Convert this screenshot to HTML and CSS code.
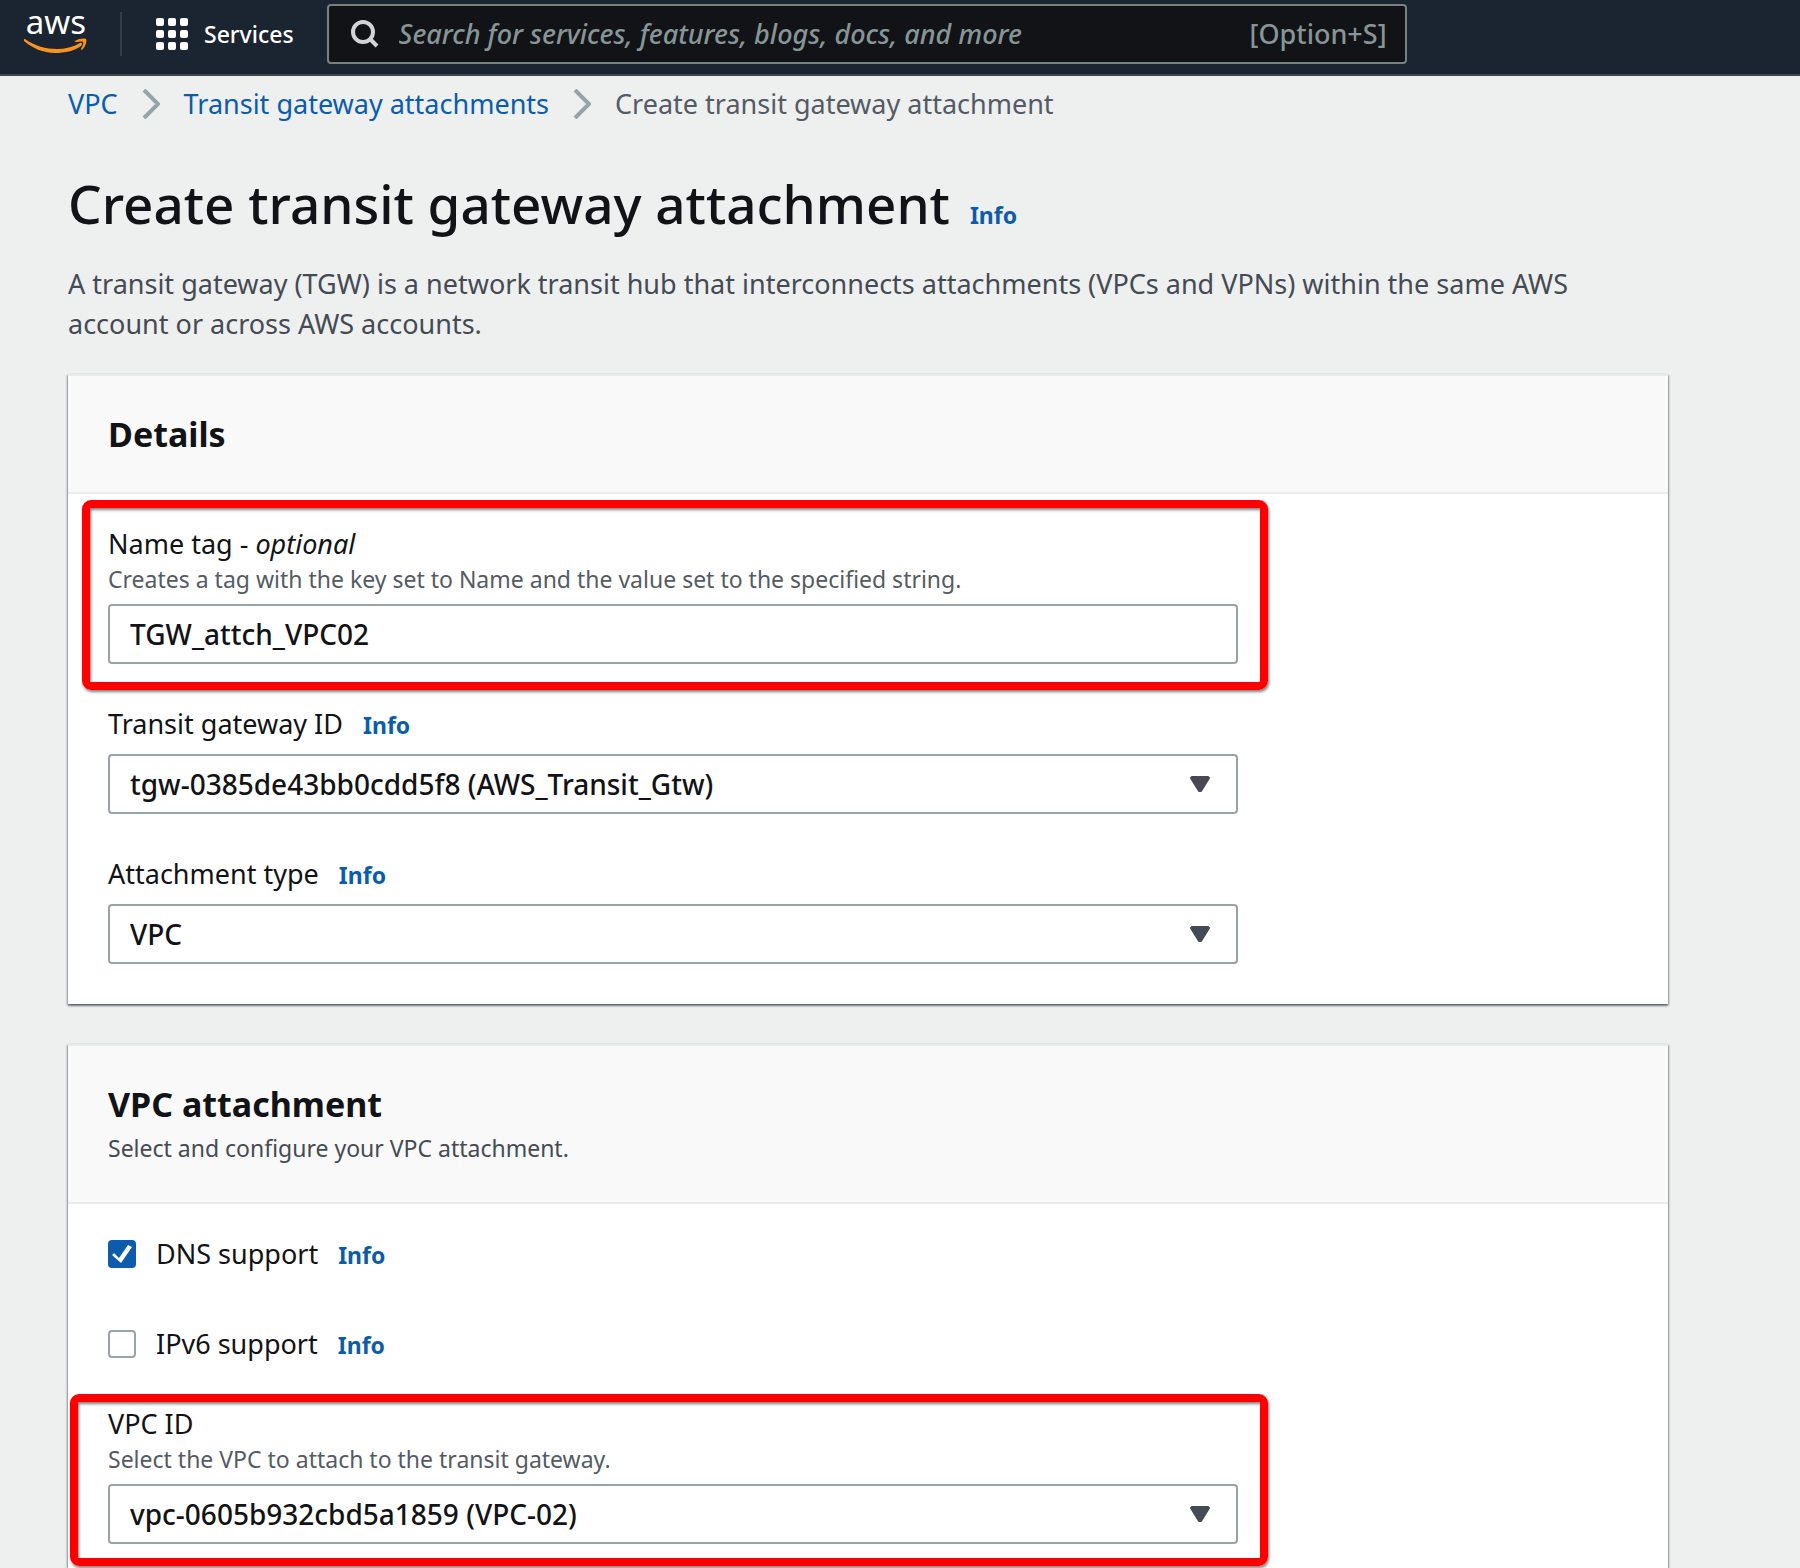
FILE: index.html
```html
<!DOCTYPE html>
<html lang="en">
<head>
    <meta charset="UTF-8">
    <meta name="viewport" content="width=device-width, initial-scale=1.0">
    <title>Create transit gateway attachment</title>
    <link rel="stylesheet" href="styles.css">
</head>
<body>
    <header class="topbar">
        <a class="logo" href="#" aria-label="aws home">
            <span class="logo-text">aws</span>
            <svg class="logo-smile" viewBox="0 0 64 16" aria-hidden="true">
                <path d="M1 1C11 8 22 11 33 11C41 11 49 9 56 5C58 4 59 6 57 8C50 13 41 15 31 15C19 15 8 10 0 3C-1 2 0 1 1 1Z"/>
                <path d="M51 3C55 0 61 0 62 1C63 3 62 8 58 12C57 12 57 11 57 11C58 9 60 5 59 4C58 3 54 4 52 4C51 4 50 3 51 3Z"/>
            </svg>
        </a>
        <button class="services" type="button">
            <svg class="grid-icon" viewBox="0 0 32 32" aria-hidden="true">
                <rect x="0" y="0" width="8" height="8" rx="2"/>
                <rect x="12" y="0" width="8" height="8" rx="2"/>
                <rect x="24" y="0" width="8" height="8" rx="2"/>
                <rect x="0" y="12" width="8" height="8" rx="2"/>
                <rect x="12" y="12" width="8" height="8" rx="2"/>
                <rect x="24" y="12" width="8" height="8" rx="2"/>
                <rect x="0" y="24" width="8" height="8" rx="2"/>
                <rect x="12" y="24" width="8" height="8" rx="2"/>
                <rect x="24" y="24" width="8" height="8" rx="2"/>
            </svg>
            Services
        </button>
        <div class="search">
            <svg class="search-icon" viewBox="0 0 28 28" aria-hidden="true">
                <circle cx="12" cy="12" r="10"/>
                <path d="M19 19L26 26"/>
            </svg>
            <input type="search" aria-label="Search" placeholder="Search for services, features, blogs, docs, and more">
            <span class="shortcut">[Option+S]</span>
        </div>
    </header>

    <main>
        <nav class="breadcrumbs" aria-label="Breadcrumbs">
            <a href="#">VPC</a>
            <svg class="chevron" viewBox="0 0 18 30" aria-hidden="true"><path d="M2 1L16 15L2 29"/></svg>
            <a href="#">Transit gateway attachments</a>
            <svg class="chevron" viewBox="0 0 18 30" aria-hidden="true"><path d="M2 1L16 15L2 29"/></svg>
            <span>Create transit gateway attachment</span>
        </nav>

        <div class="title">
            <h1>Create transit gateway attachment</h1>
            <a class="info" href="#">Info</a>
        </div>
        <p class="description">A transit gateway (TGW) is a network transit hub that interconnects attachments (VPCs and VPNs) within the same AWS account or across AWS accounts.</p>

        <!-- Details -->
        <section class="card">
            <div class="card-header">
                <h2>Details</h2>
            </div>
            <div class="card-body">
                <div class="field">
                    <label for="nameTag">Name tag - <em>optional</em></label>
                    <p class="hint">Creates a tag with the key set to Name and the value set to the specified string.</p>
                    <input class="control" type="text" id="nameTag" value="TGW_attch_VPC02">
                    <div class="highlight highlight-name"></div>
                </div>
                <div class="field">
                    <div class="label-row">
                        <label for="tgwId">Transit gateway ID</label>
                        <a class="info" href="#">Info</a>
                    </div>
                    <div class="select">
                        <select class="control" id="tgwId">
                            <option>tgw-0385de43bb0cdd5f8 (AWS_Transit_Gtw)</option>
                        </select>
                        <svg class="arrow" viewBox="0 0 20 16" aria-hidden="true"><path d="M2 1H18L19 2L11 15H9L1 2Z"/></svg>
                    </div>
                </div>
                <div class="field">
                    <div class="label-row">
                        <label for="attachType">Attachment type</label>
                        <a class="info" href="#">Info</a>
                    </div>
                    <div class="select">
                        <select class="control" id="attachType">
                            <option>VPC</option>
                        </select>
                        <svg class="arrow" viewBox="0 0 20 16" aria-hidden="true"><path d="M2 1H18L19 2L11 15H9L1 2Z"/></svg>
                    </div>
                </div>
            </div>
        </section>

        <!-- VPC attachment -->
        <section class="card card-last">
            <div class="card-header">
                <h2>VPC attachment</h2>
                <p class="subtitle">Select and configure your VPC attachment.</p>
            </div>
            <div class="card-body">
                <div class="checks">
                    <div class="label-row">
                        <input type="checkbox" id="dnsSupport" checked>
                        <label for="dnsSupport">DNS support</label>
                        <a class="info" href="#">Info</a>
                    </div>
                    <div class="label-row">
                        <input type="checkbox" id="ipv6Support">
                        <label for="ipv6Support">IPv6 support</label>
                        <a class="info" href="#">Info</a>
                    </div>
                </div>
                <div class="field">
                    <label for="vpcId">VPC ID</label>
                    <p class="hint">Select the VPC to attach to the transit gateway.</p>
                    <div class="select">
                        <select class="control" id="vpcId">
                            <option>vpc-0605b932cbd5a1859 (VPC-02)</option>
                        </select>
                        <svg class="arrow" viewBox="0 0 20 16" aria-hidden="true"><path d="M2 1H18L19 2L11 15H9L1 2Z"/></svg>
                    </div>
                    <div class="highlight highlight-vpc"></div>
                </div>
            </div>
        </section>
    </main>
</body>
</html>
```
FILE: styles.css
```css
* {
    box-sizing: border-box;
}

body {
    margin: 0;
    font-family: "Noto Sans", "Open Sans", sans-serif;
    font-size: 27px;
    font-weight: 450;
    line-height: 40px;
    color: #121316;
    background: #eeefef;
}

h1, h2, p {
    margin: 0;
}

a {
    color: #0b5cad;
    text-decoration: none;
}

input, select, button {
    font: inherit;
    color: inherit;
}

/* Top bar */
.topbar {
    display: flex;
    align-items: flex-start;
    height: 76px;
    padding: 4px 24px 0;
    background: #1b2531;
    border-bottom: 2px solid #414750;
}

.logo {
    display: flex;
    flex-direction: column;
    width: 64px;
    margin-top: 2px;
}

.logo-text {
    font-size: 33px;
    line-height: 32px;
    text-align: center;
    color: #fff;
}

.logo-smile {
    width: 64px;
    height: 16px;
    fill: #f7931e;
}

.services {
    display: flex;
    align-items: center;
    gap: 16px;
    height: 44px;
    margin: 8px 33px 0 32px;
    padding: 0 0 0 34px;
    border: 0;
    border-left: 2px solid #333c47;
    background: none;
    color: #fff;
    font-size: 23px;
    font-weight: 500;
}

.grid-icon {
    width: 32px;
    height: 32px;
    fill: #fff;
}

.search {
    display: flex;
    align-items: center;
    flex: 0 1 1080px;
    height: 60px;
    padding: 0 18px 0 22px;
    border: 2px solid #77827f;
    border-radius: 4px;
    background: #121316;
    color: #879596;
    font-weight: 500;
}

.search-icon {
    flex: none;
    width: 28px;
    height: 28px;
    margin-right: 20px;
    fill: none;
    stroke: #d0d6d6;
    stroke-width: 4;
}

.search input {
    flex: 1;
    min-width: 0;
    padding: 0;
    border: 0;
    outline: 0;
    background: none;
    font-style: italic;
}

.search input::placeholder {
    color: #879596;
    opacity: 1;
}

/* Page heading */
main {
    padding: 8px 132px 0 68px;
}

.breadcrumbs {
    display: flex;
    align-items: center;
    gap: 24px;
    color: #545b64;
}

.chevron {
    width: 18px;
    height: 30px;
    fill: none;
    stroke: #95a5a6;
    stroke-width: 4;
}

.title {
    display: flex;
    align-items: baseline;
    gap: 20px;
    margin-top: 44px;
}

h1 {
    font-size: 53px;
    line-height: 72px;
    font-weight: 500;
}

.info {
    font-size: 23px;
    line-height: 32px;
    font-weight: 700;
}

.description {
    margin-top: 24px;
    color: #444b54;
}

/* Cards */
.card {
    margin-top: 30px;
    border-top: 2px solid #e7ebeb;
    background: #fff;
    box-shadow: 0 2px 2px rgba(0, 28, 36, 0.4), 1px 1px 2px rgba(0, 28, 36, 0.3), -1px 1px 2px rgba(0, 28, 36, 0.3);
}

.card + .card {
    margin-top: 40px;
}

.card-header {
    padding: 36px 40px;
    border-bottom: 2px solid #e7ebeb;
    background: #f9f9f9;
}

h2 {
    font-size: 34px;
    line-height: 44px;
    font-weight: 700;
}

.subtitle {
    margin-top: 4px;
    font-size: 23px;
    line-height: 36px;
    color: #444b54;
}

.card-body {
    display: grid;
    grid-template-columns: repeat(4, 1fr);
    gap: 40px;
    padding: 30px 40px 40px;
}

.card-last .card-body {
    padding-bottom: 24px;
}

.field, .checks {
    position: relative;
    grid-column: 1 / span 3;
}

.field > label {
    display: block;
}

.checks {
    display: grid;
    gap: 50px;
}

.label-row {
    display: flex;
    align-items: baseline;
    gap: 20px;
}

.hint {
    font-size: 23px;
    line-height: 30px;
    color: #545b64;
}

.control {
    display: block;
    width: 100%;
    height: 60px;
    margin-top: 10px;
    padding: 0 20px;
    border: 2px solid #95a5a6;
    border-radius: 4px;
    background: #fff;
    font-size: 28px;
    font-weight: 500;
}

.select {
    position: relative;
}

select.control {
    appearance: none;
}

.arrow {
    position: absolute;
    right: 28px;
    top: 22px;
    width: 20px;
    height: 16px;
    fill: #444b54;
    stroke: #444b54;
    stroke-width: 2;
    stroke-linejoin: round;
    pointer-events: none;
}

input[type="checkbox"] {
    appearance: none;
    flex: none;
    align-self: center;
    width: 28px;
    height: 28px;
    margin: 0;
    border: 2px solid #95a5a6;
    border-radius: 4px;
}

input[type="checkbox"]:checked {
    border-color: #0b5cad;
    background: #0b5cad;
}

/* White tick */
input[type="checkbox"]:checked::before {
    content: "";
    display: block;
    width: 24px;
    height: 24px;
    background: #fff;
    clip-path: polygon(2px 13px, 4px 11px, 9px 16px, 18px 3px, 22px 5px, 11px 21px);
}

/* Red frames round the fields to fill in */
.highlight {
    position: absolute;
    border: 8px solid #f00;
    border-radius: 9px;
    box-shadow: 1px 2px 3px rgba(0, 0, 0, 0.5), inset 1px 2px 3px rgba(0, 0, 0, 0.5);
    pointer-events: none;
}

.highlight-name {
    inset: -24px -30px -26px -26px;
}

.highlight-vpc {
    inset: -10px -30px -22px -38px;
}
```
